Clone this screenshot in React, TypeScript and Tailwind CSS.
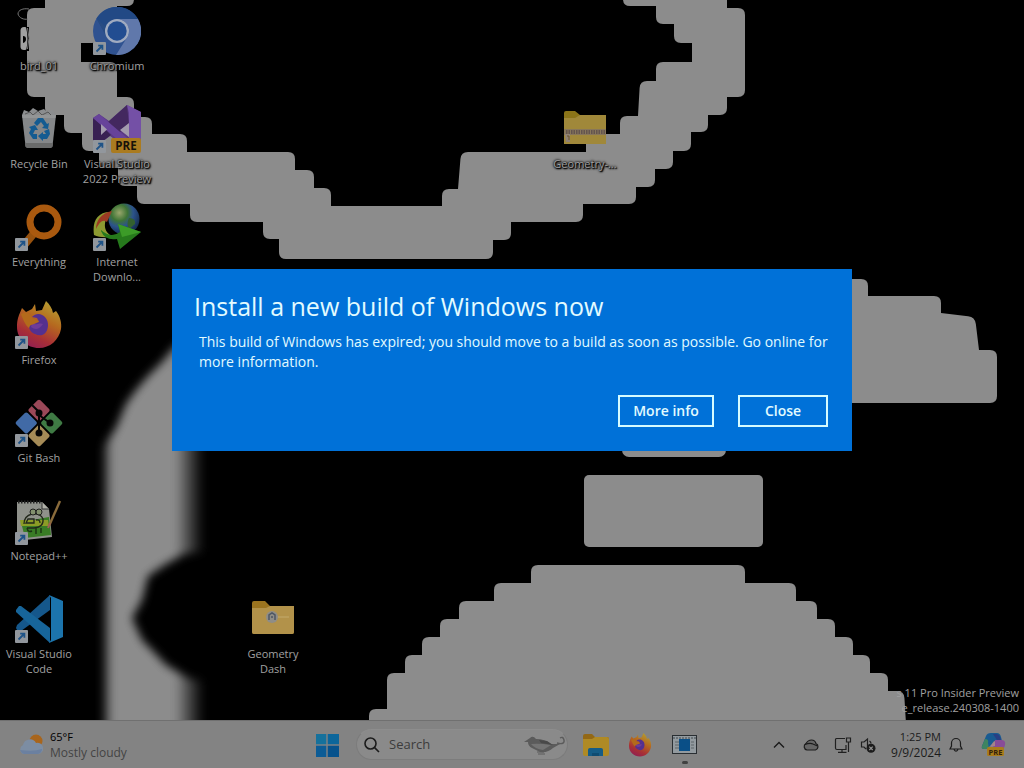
import type { ReactNode } from "react";

type Point = [number, number];

/* Builds a stepped outline whose outward corners are rounded and inward corners stay sharp. */
function steppedPath(points: Point[], radius = 7): string {
  const n = points.length;
  let area = 0;
  points.forEach(([x, y], i) => {
    const [nx, ny] = points[(i + 1) % n];
    area += x * ny - nx * y;
  });
  const parts = points.map((p, i) => {
    const a = points[(i + n - 1) % n];
    const b = points[(i + 1) % n];
    const la = Math.hypot(a[0] - p[0], a[1] - p[1]);
    const lb = Math.hypot(b[0] - p[0], b[1] - p[1]);
    const cross = (p[0] - a[0]) * (b[1] - p[1]) - (p[1] - a[1]) * (b[0] - p[0]);
    const cmd = i === 0 ? "M" : "L";
    if (cross * area <= 0) return `${cmd}${p[0]} ${p[1]}`;
    const ra = Math.min(radius, la / 2) / la;
    const rb = Math.min(radius, lb / 2) / lb;
    const start = [p[0] + (a[0] - p[0]) * ra, p[1] + (a[1] - p[1]) * ra];
    const end = [p[0] + (b[0] - p[0]) * rb, p[1] + (b[1] - p[1]) * rb];
    return `${cmd}${start[0]} ${start[1]}Q${p[0]} ${p[1]} ${end[0]} ${end[1]}`;
  });
  return parts.join("") + "Z";
}

const head = steppedPath([
  [45, -12], [45, 8], [27, 8], [27, 97], [45, 97], [45, 115], [64, 115], [64, 133], [82, 133], [82, 151],
  [99, 151], [99, 168], [118, 168], [118, 186], [137, 186], [137, 204], [190, 204], [190, 222], [263, 222],
  [263, 239], [279, 239], [279, 259], [493, 259], [493, 240], [511, 240], [511, 222], [583, 222], [583, 204],
  [636, 204], [636, 187], [655, 187], [655, 169], [673, 169], [673, 151], [691, 151], [691, 132], [708, 132],
  [708, 115], [727, 115], [727, 97], [745, 97], [745, 8], [727, 8], [727, -12], [623, -12], [623, 6], [656, 6],
  [656, 24], [674, 24], [674, 43], [692, 43], [692, 62], [656, 62], [656, 81], [640, 81], [638, 116], [620, 116],
  [620, 134], [586, 134], [586, 152], [461, 152], [458, 189], [442, 189], [442, 206], [331, 206], [331, 188],
  [314, 188], [314, 170], [295, 170], [295, 152], [187, 152], [187, 134], [152, 134], [152, 117], [134, 117],
  [134, 97], [117, 97], [117, 62], [81, 62], [81, 43], [99, 43], [99, 24], [117, 24], [117, 6], [134, 6], [134, -12],
]);

const wing = steppedPath([
  [830, 279], [868, 279], [868, 296], [941, 296], [941, 313], [975, 317], [979, 350], [997, 350], [997, 403], [830, 403],
]);

const mound = steppedPath([
  [531, 565], [745, 565], [745, 583], [796, 583], [796, 601], [817, 601], [817, 619], [835, 619], [835, 637],
  [853, 637], [853, 655], [870, 655], [870, 673], [888, 673], [888, 691], [904, 691], [907, 740], [369, 740],
  [369, 709], [387, 709], [387, 673], [405, 673], [405, 655], [422, 655], [422, 637], [440, 637], [440, 619],
  [459, 619], [459, 601], [494, 601], [494, 583], [531, 583],
]);

function Wallpaper() {
  return (
    <svg className="absolute inset-0 h-full w-full" viewBox="0 0 1024 768" preserveAspectRatio="xMinYMin slice" aria-hidden="true">
      <defs>
        <filter id="soft" x="-30%" y="-20%" width="160%" height="140%">
          <feGaussianBlur stdDeviation="5" />
        </filter>
        <linearGradient id="limb" gradientUnits="userSpaceOnUse" x1="98" y1="0" x2="204" y2="0">
          <stop offset="0" stopColor="#8c8c8c" stopOpacity="0" />
          <stop offset=".14" stopColor="#8c8c8c" />
          <stop offset=".73" stopColor="#8c8c8c" />
          <stop offset=".86" stopColor="#8c8c8c" stopOpacity=".5" />
          <stop offset="1" stopColor="#8c8c8c" stopOpacity="0" />
        </linearGradient>
      </defs>
      <g fill="#8c8c8c">
        <path d={head} />
        <path d={wing} />
        <rect x="622" y="400" width="104" height="57" rx="7" />
        <rect x="584" y="475" width="179" height="72" rx="5" />
        <path d={mound} />
        <path
          filter="url(#soft)"
          fill="url(#limb)"
          d="M220 345 H176 L162 362 L148 376 L136 390 L126 404 L116 428 L104 446 V790 H220 V684 L188 678 L166 665 L152 650 L142 640 L132 618 L142 600 L148 576 L166 564 L184 554 L220 550 Z"
        />
      </g>
    </svg>
  );
}

function ShortcutBadge() {
  return (
    <g>
      <rect x="0" y="35" width="13" height="13" rx="1" fill="#92979d" />
      <path d="M3.500 44.500 L9 39 M5.200 38.600 H9.400 V42.800" fill="none" stroke="#1f5387" strokeWidth="1.800" />
    </g>
  );
}

function Icon({ children, shortcut = false }: { children: ReactNode; shortcut?: boolean }) {
  return (
    <svg className="size-12 shrink-0" viewBox="0 0 48 48" aria-hidden="true">
      {children}
      {shortcut && <ShortcutBadge />}
    </svg>
  );
}

const BirdIcon = () => (
  <Icon>
    <path d="M14 2 C8 1 3 3 3 7 C4 11 9 13 13 12" fill="none" stroke="#777" strokeWidth="1" />
    <rect x="5.500" y="20" width="7.500" height="23" rx="3.500" fill="#a0a0a0" />
    <path d="M8 29 q3 0 3 3 t-3 4 z M11 20 h3 v24 h-3 q3-12 0-24" fill="#000" />
    <path d="M12.500 21 q3 10 0 21" fill="none" stroke="#777" strokeWidth="1" />
  </Icon>
);

const ChromiumIcon = () => (
  <Icon shortcut>
    <circle cx="24" cy="24" r="24" fill="#2f5290" />
    <path d="M24 12 H45 A24 24 0 0 1 23 48 L34.400 30 A12 12 0 0 0 24 12" fill="#6078ab" />
    <path d="M3.500 11.500 A24 24 0 0 1 45 12 H24 A12 12 0 0 0 13 19.500 L12 26 Z" fill="#224985" />
    <path d="M3.500 11.500 L13 29 L12 19 Z" fill="#284c83" />
    <circle cx="24" cy="24" r="12" fill="#a0abc0" />
    <circle cx="24" cy="24" r="9.700" fill="#224d91" />
  </Icon>
);

const RecycleIcon = () => (
  <Icon>
    <path d="M7 10 L9 5 L14 7 L18 3 L23 6 L29 4 L32 7 L38 5 L41 11 Z" fill="#8b8d8f" />
    <path d="M10 9 l5-2 3 3 5-4 4 4 6-3 3 3" fill="none" stroke="#555" strokeWidth="1" />
    <path d="M7 10 H41 L37.500 41 Q37 43 35 43 H13 Q11 43 10.500 41 Z" fill="#858789" />
    <path d="M7 10 H41 L40.500 13 H7.500 Z" fill="#939596" />
    <path d="M10 38 H38 L37.500 42 L35 43 H13 L10.500 42 Z" fill="#6a6b6b" />
    <g fill="#145b91">
      <path d="M19 18 L23 13 H28 L32 19 L34 18 L33 24 L27 23 L29 21 L26 17 L22 21 Z" />
      <path d="M14 22 L20 20 L23 25 L20 25 L18 29 H22 V34 H18 L14 28 L16 24 Z" />
      <path d="M29 26 L34 24 L35 29 L32 34 H28 V36 L23 31 L28 27 V29 H31 Z" />
    </g>
  </Icon>
);

const VisualStudioIcon = () => (
  <Icon shortcut>
    <path d="M0 13 L6 9 L16 16 L34 0 L48 7 V38 L34 43 L17 31 L6 39 L0 35 Z" fill="#5b3a85" />
    <path d="M15 17 L34 0 L36 20 L22 31 Z" fill="#43285f" />
    <path d="M0 13 V35 L6 39 L18 30 L12 24 L8 29 V19 Z" fill="#392153" />
    <path d="M0 13 L6 9 L40 38 L34 43 Z" fill="#67439a" />
    <path d="M34 0 L48 7 V38 L36 42 V8 Z" fill="#7450a6" />
    <path d="M8 19 V30 L14 24.500 Z M36 18 L27 25 L36 32 Z" fill="#a39bae" />
    <rect x="18" y="33" width="30" height="15" rx="2" fill="#aa7b20" />
    <text x="33" y="45" textAnchor="middle" fontFamily="Open Sans, sans-serif" fontWeight="700" fontSize="11.500" fill="#17120a">PRE</text>
  </Icon>
);

const EverythingIcon = () => (
  <Icon shortcut>
    <path d="M20 29 L10 41" stroke="#98520e" strokeWidth="8" />
    <circle cx="29" cy="19" r="14" fill="none" stroke="#a9590f" strokeWidth="7" />
  </Icon>
);

const IdmIcon = () => (
  <Icon shortcut>
    <defs>
      <radialGradient id="globe" cx=".35" cy=".3" r=".75">
        <stop offset="0" stopColor="#99a66c" />
        <stop offset=".35" stopColor="#3e7435" />
        <stop offset=".6" stopColor="#2c538b" />
        <stop offset="1" stopColor="#132849" />
      </radialGradient>
    </defs>
    <circle cx="31" cy="16" r="15.500" fill="url(#globe)" />
    <path d="M36 15 q7 0 6 6 l-6 5 q-3-5 0-11" fill="#33602f" />
    <path d="M17 9 C4 9 -1 19 1 32 C6 35 14 34 20 34 C12 30 8 22 17 9 Z" fill="#8c9931" />
    <path d="M19 8 C8 10 3 18 3 26 C7 18 10 16 14 19 Z" fill="#9c3a23" />
    <path d="M8 27 q10 9 19 2 l-2-8 L48 29 L27 46 L24 36 Q12 38 8 28 Z" fill="#26791c" />
    <path d="M25 21 L48 29 L29 34 Z" fill="#3c9b28" />
  </Icon>
);

function FirefoxShape({ id }: { id: string }) {
  return (
    <>
      <defs>
        <linearGradient id={id} x1=".8" y1="0" x2=".3" y2="1">
          <stop offset="0" stopColor="#b5a232" />
          <stop offset=".4" stopColor="#b5691f" />
          <stop offset=".75" stopColor="#a82f36" />
          <stop offset="1" stopColor="#911f52" />
        </linearGradient>
      </defs>
      <path d="M4 14 L7 7 L11 11 L17 8 L20 3 L21 10 L27 9 L31 0 C35 4 37 7 38 12 L41 10 C45 15 47 22 46 28 C44 39 35 47 24 47 C12 47 2 38 2 26 C2 20 3 17 4 14 Z" fill={`url(#${id})`} />
      <path d="M17 16 C23 9 34 15 33 25 C32 34 26 36 20 33 C15 31 13 27 15 23 L24 21 L22 17 Z" fill="#54308f" />
      <path d="M17 22 C20 25 25 21 28 23 C24 29 20 29 16 26 Z" fill="#6f3c98" />
      <path d="M6 13 C12 10 16 13 17 17 L24 20 C21 24 15 22 14 27 C10 24 8 18 6 13 Z" fill="#b36a1b" />
    </>
  );
}

const GitBashIcon = () => (
  <Icon shortcut>
    <g transform="rotate(45 24 24)">
      <rect x="7" y="7" width="16" height="16" rx="2" fill="#9b4858" />
      <rect x="25" y="7" width="16" height="16" rx="2" fill="#3f7a44" />
      <rect x="7" y="25" width="16" height="16" rx="2" fill="#416aa6" />
      <rect x="25" y="25" width="16" height="16" rx="2" fill="#a58b57" />
    </g>
    <path d="M17 6 L24 13 V34 M24 16 L35 24" fill="none" stroke="#050505" strokeWidth="2" />
    <circle cx="24" cy="14" r="3.500" fill="#050505" />
    <circle cx="35" cy="24" r="3.500" fill="#050505" />
    <circle cx="24" cy="34" r="3.500" fill="#050505" />
  </Icon>
);

const NotepadIcon = () => (
  <Icon shortcut>
    <path d="M2 5 H27 L34 12 L37 40 L10 43 L2 41 Z" fill="#8f918b" />
    <path d="M6 25 L34 20 L36 38 L10 41 Z" fill="#397c25" />
    <path d="M5 23 H33 L34 29 H6 Z" fill="#8b9c26" />
    <path d="M27 5 V12 H34" fill="#b0b0a8" stroke="#333" />
    <path d="M3 5 H27" stroke="#222" strokeWidth="3" strokeDasharray="1.500 1.500" />
    <path d="M9 27 Q9 19 17 17 Q26 16 28 22 Q29 30 19 31 H12 M13 22 h6 v4 h-8 z M21 23 q4-1 4 3" fill="none" stroke="#22271b" strokeWidth="1.300" />
    <circle cx="18" cy="15" r="3" fill="#82906e" stroke="#202020" />
    <circle cx="24" cy="15" r="3" fill="#82906e" stroke="#202020" />
    <path d="M12 31 q1 5 5 3 M21 31 v6 M26 31 v5" fill="none" stroke="#1b3213" strokeWidth="1.400" />
    <path d="M45 4 L34 29" stroke="#8a6b3b" strokeWidth="2.400" />
    <path d="M35 26 L33 31" stroke="#a06054" strokeWidth="2" />
  </Icon>
);

const VsCodeIcon = () => (
  <Icon shortcut>
    <path d="M2 30 L35 0 V15 L6 36 Q4 37 2 35 L1 33 Z" fill="#15578b" />
    <path d="M6 11 L35 33 V48 L1 17 V15 L4 11 Z" fill="#17659a" />
    <path d="M34 0 L48 6 V42 L34 48 L36 45 V3 Z" fill="#1c74ac" />
  </Icon>
);

const ZipFolderIcon = () => (
  <Icon>
    <path d="M3 8 Q3 6 5 6 H14 L19 10 H45 V39 H3 Z" fill="#8b7418" />
    <path d="M3 13 H14 L19 10 H45 V39 H3 Z" fill="#a0883a" />
    <rect x="3" y="24" width="42" height="6" fill="#88775a" />
    <path d="M5 26 H44 M5 28 H44" stroke="#57494c" strokeWidth="1.600" strokeDasharray="1.500 1" />
    <path d="M4 29 h5 v8 h-4 z" fill="#8f8175" />
    <path d="M6 31 h2 v4" fill="none" stroke="#6b552b" />
  </Icon>
);

const GameFolderIcon = () => (
  <Icon>
    <path d="M3 8 Q3 6 5 6 H16 L21 11 H45 V37 Q45 39 43 39 H5 Q3 39 3 37 Z" fill="#9b741f" />
    <path d="M3 13 H17 L21 11 H45 V37 Q45 39 43 39 H5 Q3 39 3 37 Z" fill="#b2924a" />
    <path d="M17 22 H40" stroke="#c3aa6c" strokeWidth="1" />
    <circle cx="23" cy="22" r="6" fill="#8f8d87" />
    <path d="M20 25 V20 L23 18 L26 20 V25 M22 22 h2" fill="none" stroke="#4d5664" strokeWidth="1.500" />
  </Icon>
);

type DesktopItem = { label: ReactNode; icon: ReactNode; place: string };

const desktopItems: DesktopItem[] = [
  { label: "bird_01", icon: <BirdIcon />, place: "col-start-1 row-start-1" },
  { label: "Recycle Bin", icon: <RecycleIcon />, place: "col-start-1 row-start-2" },
  { label: "Everything", icon: <EverythingIcon />, place: "col-start-1 row-start-3" },
  { label: "Firefox", icon: <Icon shortcut><FirefoxShape id="fx-desk" /></Icon>, place: "col-start-1 row-start-4" },
  { label: "Git Bash", icon: <GitBashIcon />, place: "col-start-1 row-start-5" },
  { label: "Notepad++", icon: <NotepadIcon />, place: "col-start-1 row-start-6" },
  { label: <>Visual Studio<br />Code</>, icon: <VsCodeIcon />, place: "col-start-1 row-start-7" },
  { label: "Chromium", icon: <ChromiumIcon />, place: "col-start-2 row-start-1" },
  { label: <>Visual Studio<br />2022 Preview</>, icon: <VisualStudioIcon />, place: "col-start-2 row-start-2" },
  { label: <>Internet<br />Downlo...</>, icon: <IdmIcon />, place: "col-start-2 row-start-3" },
  { label: <>Geometry<br />Dash</>, icon: <GameFolderIcon />, place: "col-start-4 row-start-7" },
  { label: "Geometry-...", icon: <ZipFolderIcon />, place: "col-start-8 row-start-2" },
];

function Desktop() {
  return (
    <div className="relative grid auto-rows-[98px] grid-cols-[repeat(auto-fill,78px)]">
      {desktopItems.map((item, i) => (
        <button key={i} type="button" className={`flex flex-col items-center gap-[3px] pt-[7px] ${item.place}`}>
          {item.icon}
          <span className="whitespace-nowrap text-center text-[11px] leading-[15px] text-[#a0a0a0] [text-shadow:1px_1px_2px_#000,0_0_2px_#000,1px_1px_1px_#000,0_0_3px_#000]">
            {item.label}
          </span>
        </button>
      ))}
    </div>
  );
}

function ExpiryDialog() {
  return (
    <section
      role="dialog"
      aria-labelledby="dialog-title"
      className="flex w-[680px] max-w-full flex-col bg-[#0071d8] pt-[19px] pr-6 pb-6 pl-[22px] text-[#e2fbff]"
    >
      <h1 id="dialog-title" className="text-[25px] leading-9 font-normal">Install a new build of Windows now</h1>
      <p className="pt-2 pl-[5px] text-sm leading-5">
        This build of Windows has expired; you should move to a build as soon as possible. Go online for more information.
      </p>
      <div className="flex justify-end gap-6 pt-[23px]">
        <button type="button" className="h-8 w-24 border-2 border-[#d5fbff] text-sm font-semibold">More info</button>
        <button type="button" className="h-8 w-[90px] border-2 border-[#d5fbff] text-sm font-semibold">Close</button>
      </div>
    </section>
  );
}

function Taskbar() {
  return (
    <footer className="relative flex h-12 items-center border-t border-[#707070] bg-[#838383] text-[#1c1c1c]">
      <div className="flex flex-1 pl-[18px]">
        <button type="button" className="flex items-center gap-[7px] text-left leading-4">
          <svg className="h-6 w-[25px]" viewBox="0 0 25 24" aria-hidden="true">
            <circle cx="18" cy="8" r="6.500" fill="#a8651c" />
            <path d="M5 21 a5 5 0 0 1 0-9 a7 7 0 0 1 13-2 a5.500 5.500 0 0 1 3 11 Z" fill="#7c8da3" />
            <path d="M2 17 q1 3 4 4 h14 q4-1 4-5 q-8 3-22 1" fill="#6b80a0" />
          </svg>
          <span>
            <span className="block text-[11px] leading-4 text-black">65°F</span>
            <span className="block text-xs text-[#444]">Mostly cloudy</span>
          </span>
        </button>
      </div>

      <div className="flex w-[394px] items-center">
        <button type="button" aria-label="Start">
          <svg className="size-6" viewBox="0 0 24 24" aria-hidden="true">
            <path d="M1 1 H11.300 V11.300 H1 Z" fill="#15719c" />
            <path d="M12.700 1 H24 V11.300 H12.700 Z" fill="#0c669b" />
            <path d="M1 12.700 H11.300 V24 H1 Z" fill="#0c5c96" />
            <path d="M12.700 12.700 H24 V24 H12.700 Z" fill="#07528c" />
          </svg>
        </button>
        <div className="ml-[17px] flex h-[31px] w-[212px] items-center gap-[9px] rounded-full border border-[#7c7c7c] border-t-[#8d8d8d] bg-[#8a8a8a] pl-[7px] pr-px">
          <svg className="size-4 shrink-0" viewBox="0 0 16 16" fill="none" stroke="#1b1b1b" strokeWidth="1.600" aria-hidden="true">
            <circle cx="6.500" cy="6.500" r="5.500" />
            <path d="M10.600 10.600 L15 15" />
          </svg>
          <input type="text" aria-label="Search" placeholder="Search" className="w-0 min-w-0 flex-1 bg-transparent text-[13px] text-[#222] outline-none placeholder:text-[#3c3c3c]" />
          <svg className="h-5 w-[43px] shrink-0" viewBox="0 0 43 20" aria-hidden="true">
            <path d="M1 7 L7 3 Q10 0 13 4 Q22 4 28 9 L37 9 L30 13 Q25 18 17 17 L9 13 Q5 11 5 7 Z" fill="#5b5b5b" />
            <path d="M8 9 Q16 8 28 10 L20 15 Q12 14 8 9" fill="#747474" />
            <path d="M16 5 L24 6 L30 10 L18 8" fill="#494949" />
            <path d="M34 8 q8 2 7-3 q-1-4-4-2" fill="none" stroke="#5b5b5b" strokeWidth="1.400" />
            <path d="M14 17 h7 M15 19 h7" stroke="#5a5a5a" />
          </svg>
        </div>
        <button type="button" aria-label="File Explorer" className="ml-[15px]">
          <svg className="h-6 w-[26px]" viewBox="0 0 26 24" aria-hidden="true">
            <path d="M0 3 Q0 1 2 1 H9 L12 4 H24 Q26 4 26 6 V8 H0 Z" fill="#936816" />
            <path d="M0 6 H9 L12 4 H24 Q26 4 26 6 V21 Q26 23 24 23 H2 Q0 23 0 21 Z" fill="#af8a25" />
            <path d="M5 23 V17 Q5 15 7 15 H18 Q20 15 20 17 V23 Z" fill="#155c86" />
            <path d="M9 23 v-3 h7 v3" fill="#0f4c72" />
          </svg>
        </button>
        <button type="button" aria-label="Firefox" className="ml-[19px]">
          <svg className="size-6" viewBox="0 0 48 48" aria-hidden="true"><FirefoxShape id="fx-bar" /></svg>
        </button>
        <button type="button" aria-label="Setup" className="ml-5 flex flex-col items-center gap-[7px] pt-[9px]">
          <svg className="h-[19px] w-[25px]" viewBox="0 0 25 19" aria-hidden="true">
            <rect x=".5" y=".5" width="24" height="18" fill="#929a9f" stroke="#292e32" />
            <path d="M1 3 H24" stroke="#42484d" strokeDasharray="2 1" />
            <path d="M3 7 h4 M3 10 h4 M3 13 h4 M19 7 h3 M19 10 h3 M19 13 h3" stroke="#5d6468" />
            <rect x="7" y="4" width="11" height="12" fill="#0a4f87" />
          </svg>
          <span className="h-[3px] w-1.5 rounded-full bg-[#414141]" />
        </button>
      </div>

      <div className="flex flex-1 items-center justify-end pr-[18px]">
        <button type="button" aria-label="Show hidden icons">
          <svg className="h-3 w-3" viewBox="0 0 12 12" fill="none" stroke="#1b1b1b" strokeWidth="1.400" aria-hidden="true"><path d="M1 8.500 L6 3.500 L11 8.500" /></svg>
        </button>
        <button type="button" aria-label="OneDrive" className="ml-[18px]">
          <svg className="h-3 w-4" viewBox="0 0 16 12" fill="#666" stroke="#1c1c1c" strokeWidth="1.200" aria-hidden="true">
            <path d="M4 11 A3.500 3.500 0 0 1 3 4.500 Q5 1 8.500 1 Q12 1 13 4.500 A3.500 3.500 0 0 1 12.500 11 Z" />
            <path d="M2 5.500 Q7 3.500 10 5 L14.500 7" fill="none" />
          </svg>
        </button>
        <button type="button" aria-label="Network" className="ml-[15px]">
          <svg className="h-4 w-[18px]" viewBox="0 0 18 16" fill="none" stroke="#202020" strokeWidth="1.200" aria-hidden="true">
            <path d="M11 1.500 H2.500 Q1.500 1.500 1.500 3 V11 Q1.500 12.500 3 12.500 H12 V8 M8 12.500 V15 M4 15.400 H12.500 M12.500 1 H16.500 V5 H12.500 Z M14.500 5 V15" />
          </svg>
        </button>
        <button type="button" aria-label="Volume muted" className="ml-2">
          <svg className="size-4" viewBox="0 0 16 16" aria-hidden="true">
            <path d="M7.500 9 V2 L4 5 H1.500 V10 H4 L6 12 M9.500 4 Q11 5 11 6.500" fill="none" stroke="#202020" strokeWidth="1.200" />
            <circle cx="11" cy="11.300" r="4.500" fill="#1c1c1c" />
            <path d="M9.300 9.600 L12.700 13 M12.700 9.600 L9.300 13" stroke="#949494" strokeWidth="1.200" />
          </svg>
        </button>
        <button type="button" className="ml-[15px] text-right text-[11px] leading-4">
          <span className="block text-[11px] leading-4">1:25 PM</span>
          <span className="block text-xs">9/9/2024</span>
        </button>
        <button type="button" aria-label="Notifications" className="ml-2">
          <svg className="h-4 w-3.5" viewBox="0 0 14 16" fill="none" stroke="#1c1c1c" strokeWidth="1.200" aria-hidden="true">
            <path d="M1 12 L2.500 9 V6 A4.500 4.500 0 0 1 11.500 6 V9 L13 12 Z M5 12.500 Q7 16 9 12.500" />
          </svg>
        </button>
        <button type="button" aria-label="Copilot preview" className="ml-[17px]">
          <svg className="size-[26px]" viewBox="0 0 26 26" aria-hidden="true">
            <path d="M2 14 L6 4 Q7 1 11 1 H17 Q20 1 21 5 L22 9 H15 Q13 9 12 12 L10 17 H4 Q1 17 2 14" fill="#195b91" />
            <path d="M2 14 L5 7 Q9 7 8 11 L9 17 H4 Q1 17 2 14" fill="#3e8461" />
            <path d="M15 8 H21 Q26 8 25 13 L23 19 H12 Z" fill="#884c98" />
            <path d="M13 2 H17 Q20 3 21 8 H17 Z" fill="#293f84" />
            <path d="M9 15 L15 9 L15 14 Z" fill="#a5838b" />
            <rect x="7" y="15" width="17" height="9" rx="1.500" fill="#a97c1b" />
            <text x="15.500" y="22.500" textAnchor="middle" fontFamily="Open Sans, sans-serif" fontSize="7.500" fontWeight="700" fill="#33210a">PRE</text>
          </svg>
        </button>
      </div>
    </footer>
  );
}

export default function App() {
  return (
    <div className="relative flex min-h-screen flex-col overflow-hidden bg-black font-['Open_Sans','Noto_Sans',sans-serif]">
      <Wallpaper />
      <main className="relative flex-1">
        <Desktop />
        <div className="pointer-events-none absolute inset-0 flex items-center justify-center">
          <div className="pointer-events-auto max-w-full"><ExpiryDialog /></div>
        </div>
        <p className="absolute right-[5px] bottom-[5px] text-right text-[11px] leading-[15px] text-[#a0a0a0]">
          <span className="block">s 11 Pro Insider Preview</span>
          <span className="block">e_release.240308-1400</span>
        </p>
      </main>
      <Taskbar />
    </div>
  );
}
